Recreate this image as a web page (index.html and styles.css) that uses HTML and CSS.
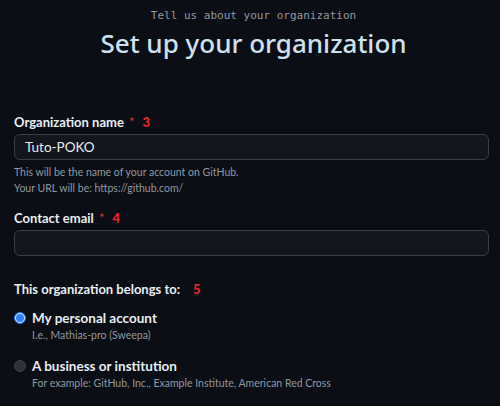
FILE: index.html
```html
<!DOCTYPE html>
<html lang="en">
<head>
<meta charset="utf-8">
<title>Set up your organization</title>
<link rel="stylesheet" href="styles.css">
</head>
<body>
<div class="page">
  <header class="head">
    <p class="kicker">Tell us about your organization</p>
    <h1 class="title">Set up your organization</h1>
  </header>

  <form class="form">
    <div class="field">
      <label class="label">Organization name <span class="req">*</span><span class="anno">3</span></label>
      <div class="input">Tuto-POKO</div>
      <p class="note">This will be the name of your account on GitHub.<br>Your URL will be: https://github.com/</p>
    </div>

    <div class="field field-email">
      <label class="label">Contact email <span class="req">*</span><span class="anno">4</span></label>
      <div class="input"></div>
    </div>

    <div class="group">
      <p class="label group-title">This organization belongs to:<span class="anno anno-wide">5</span></p>
      <div class="option">
        <span class="radio radio-on"></span>
        <div class="opt-text">
          <div class="opt-title">My personal account</div>
          <div class="opt-note">I.e., Mathias-pro (Sweepa)</div>
        </div>
      </div>
      <div class="option">
        <span class="radio"></span>
        <div class="opt-text">
          <div class="opt-title">A business or institution</div>
          <div class="opt-note">For example: GitHub, Inc., Example Institute, American Red Cross</div>
        </div>
      </div>
    </div>
  </form>
</div>
</body>
</html>
```

FILE: styles.css
```css
* { box-sizing: border-box; }
html, body { margin: 0; padding: 0; }
body {
  background: #0b0e14;
  color: #e6edf3;
  font-family: Lato, "Noto Sans", sans-serif;
  width: 500px;
  height: 406px;
  overflow: hidden;
}
.page { padding: 8px 11px 0 14px; }
.head { text-align: center; padding-left: 4px; }
.kicker {
  margin: 0;
  font-family: "DejaVu Sans Mono", "Liberation Mono", monospace;
  font-size: 11px;
  line-height: 16px;
  color: #9198a1;
}
.title {
  margin: 2px 0 0;
  font-family: "Noto Sans", sans-serif;
  font-size: 26px;
  line-height: 34px;
  font-weight: 500;
  color: #cfe0ee;
}
.form { margin-top: 53px; }
.label {
  display: block;
  margin: 0;
  font-size: 13px;
  line-height: 18px;
  font-weight: 700;
  color: #e6edf3;
}
.req { color: #d0393a; font-weight: 400; margin-left: 2px; }
.anno { color: #e8232a; font-weight: 900; margin-left: 8px; }
.anno-wide { margin-left: 13px; }
.input {
  margin-top: 3px;
  height: 26px;
  border: 1px solid #3a3f47;
  border-radius: 6px;
  background: #13161c;
  padding: 0 10px;
  font-size: 13.5px;
  line-height: 24px;
  color: #e6edf3;
}
.note {
  margin: 4px 0 0;
  font-size: 10.5px;
  line-height: 16px;
  color: #9198a1;
}
.field-email { margin-top: 13px; }
.group { margin-top: 24px; }
.group-title { margin-bottom: 11px; }
.option { display: flex; gap: 6px; margin-bottom: 14px; }
.radio {
  flex: none;
  width: 12px;
  height: 12px;
  margin-top: 3px;
  border-radius: 50%;
  background: #2d3138;
  border: 1px solid #3d434c;
}
.radio-on {
  background: #2f81f7;
  border: 1px solid #2f81f7;
  box-shadow: inset 0 0 0 1px #e6edf3;
}
.opt-title { font-size: 13.5px; line-height: 18px; font-weight: 700; color: #e6edf3; }
.opt-note { font-size: 10.5px; line-height: 16px; color: #9198a1; }
```
